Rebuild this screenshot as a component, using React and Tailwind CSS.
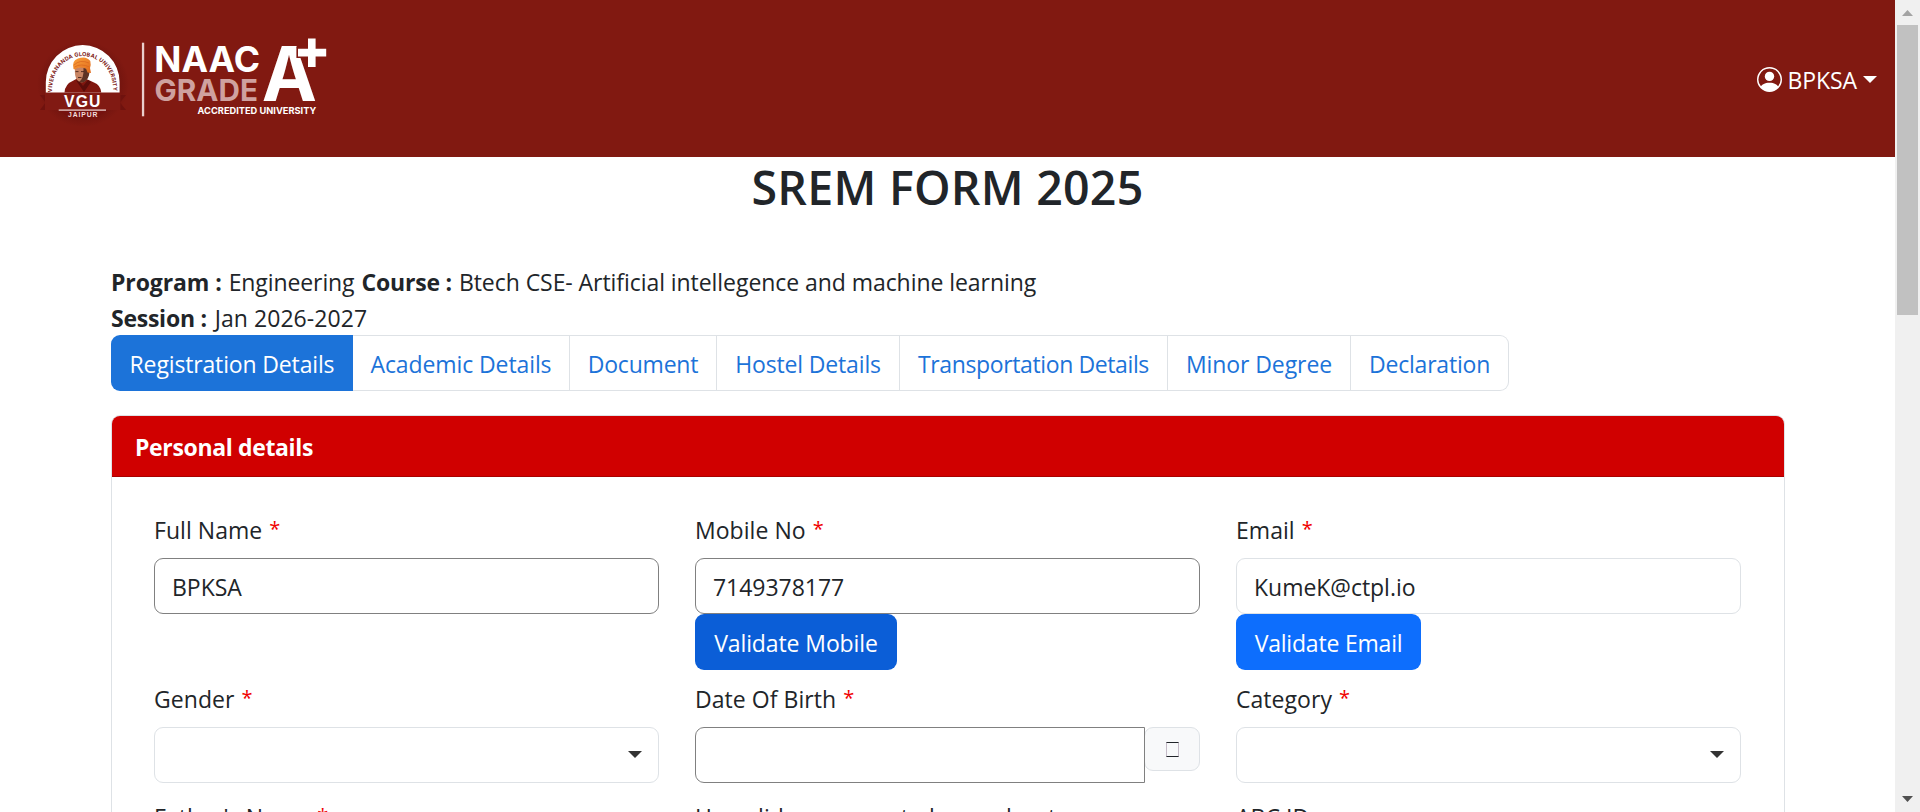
import { BsPersonCircle } from "react-icons/bs";

const tabs = [
  { label: "Registration Details", width: "w-[242px]", track: "tracking-[-0.15px]" },
  { label: "Academic Details", width: "w-[217px]", track: "tracking-[-0.1px]" },
  { label: "Document", width: "w-[147px]", track: "tracking-[-0.2px]" },
  { label: "Hostel Details", width: "w-[183px]", track: "tracking-[-0.15px]" },
  { label: "Transportation Details", width: "w-[268px]", track: "tracking-[-0.38px]" },
  { label: "Minor Degree", width: "w-[183px]", track: "tracking-[-0.08px]" },
  { label: "Declaration", width: "w-[158px]", track: "tracking-[-0.2px]" },
];

function Logo() {
  return (
    <svg className="block h-[157px] w-[360px]" viewBox="0 0 360 157" fontFamily="Inter, sans-serif" fontWeight="700">
      <defs>
        <path id="crest-arc" d="M52.2 92 Q51.6 88 53.4 80.5 A29.8 29.8 0 0 1 112 80.5 Q113.8 88 113 95" />
        <radialGradient id="crest-shadow">
          <stop offset="0.55" stopColor="#5c0d0b" stopOpacity="0.75" />
          <stop offset="1" stopColor="#5c0d0b" stopOpacity="0" />
        </radialGradient>
        <linearGradient id="turban" x1="0" y1="0" x2="1" y2="1">
          <stop offset="0" stopColor="#fba33c" />
          <stop offset="1" stopColor="#e0681a" />
        </linearGradient>
      </defs>
      <ellipse cx="83" cy="84" rx="46" ry="43" fill="url(#crest-shadow)" />
      <path d="M40 95 L52 95 L52 110 L40 110 L45.5 102.5Z M126 95 L113 95 L113 110 L126 110 L120 102.5Z" fill="#6f120e" />
      <path d="M58 110 H108 Q98 118 83 118 Q68 118 58 110Z" fill="#76120f" />
      <path d="M45.8 93 V82 A36.9 36.9 0 0 1 119.6 82 V93Z" fill="#fff" />
      <text fontSize="5.5" letterSpacing="0.15" fill="#7d1814">
        <textPath href="#crest-arc">VIVEKANANDA GLOBAL UNIVERSITY</textPath>
      </text>
      <path d="M64.5 92.5 Q65 84 73.5 80.5 L78 78 L87.5 79.5 L94 82.5 Q100.5 85 101.3 92.5Z" fill="#80170f" />
      <path d="M77 78 L83 86 L88 80 L91 82 L84 92 L76.5 81Z" fill="#5a0d0a" />
      <path d="M75 68 Q74.3 76 77 80 Q80.5 84 84.5 81.5 Q88.5 79 89.5 70 L86 66Z" fill="#c98563" />
      <path d="M83.5 68 L89.5 69 Q90 76 86.5 80 Q83 84 79 81.8 Q84 79 83.5 68Z" fill="#5e3324" />
      <path d="M75.5 71.6 H78.5 M81 71.6 H84 M78 77.5 H81.5" stroke="#4a251c" strokeWidth="0.9" />
      <path d="M73.5 69 Q71.3 61 78 58.6 Q86 55.5 90.3 61 Q91.2 65 90 68 L91 73 L87.5 72.5 L86 68.5 Q79 66 74.8 69.5Z" fill="url(#turban)" />
      <path d="M74 65 Q80 59 89 63 M74.5 67 Q81 63 89.5 67" stroke="#d9661c" strokeWidth="0.7" fill="none" />
      <path d="M45 92.6 H120.4 V110 H45Z" fill="#811a13" />
      <text x="64" y="107.4" fontFamily="Liberation Sans, sans-serif" fontSize="15.8" textLength="36.5" fill="#fff">VGU</text>
      <rect x="58.7" y="109.5" width="47.3" height="1.2" fill="#f3dfdd" />
      <text x="68" y="116.7" fontFamily="Liberation Sans, sans-serif" fontSize="6.8" textLength="29.5" fill="#f3dfdd">JAIPUR</text>
      <rect x="141.9" y="42.7" width="2.3" height="73.6" fill="#eacfcd" />
      <text x="154.3" y="72.2" fontSize="35.2" textLength="105.7" lengthAdjust="spacingAndGlyphs" fill="#fff">NAAC</text>
      <text x="154.6" y="101.3" fontSize="29.6" textLength="103.4" lengthAdjust="spacingAndGlyphs" fill="#cfa19f">GRADE</text>
      <text x="261.7" y="101.2" fontSize="76" fontWeight="700" textLength="55.2" lengthAdjust="spacingAndGlyphs" fill="#fff">A</text>
      <path d="M308 38.4 H315.6 V48.7 H326.2 V56.5 H315.6 V67 H308 V56.5 H298 V48.7 H308Z" fill="#fff" stroke="#811911" strokeWidth="3.2" paintOrder="stroke" />
      <text x="197.6" y="114.2" fontSize="9.2" textLength="118.6" lengthAdjust="spacingAndGlyphs" fill="#fff">ACCREDITED UNIVERSITY</text>
    </svg>
  );
}

function Header() {
  return (
    <header className="flex h-[157px] shrink-0 items-start justify-between bg-[#811911] pr-[18px]">
      <Logo />
      <div className="mt-[62px] flex h-[36px] items-center text-white">
        <BsPersonCircle className="mt-[-1px] size-[25px]" />
        <span className="ml-1.5 tracking-[-0.1px]">BPKSA</span>
        <svg className="ml-[6px] mt-[-2px] h-[7px] w-[14px]" viewBox="0 0 14 7">
          <path d="M0 0H14L7 7Z" fill="currentColor" />
        </svg>
      </div>
    </header>
  );
}

function Field({ label, required, children }) {
  return (
    <div className="flex w-[505px] flex-col items-start">
      <div className="mb-3 h-[35px] whitespace-nowrap pt-px tracking-[0.05px]">
        {label}
        {required && <span className="relative top-[-3px] ml-[7px] text-[20px] text-[#f00000]">*</span>}
      </div>
      {children}
    </div>
  );
}

function TextBox({ value, light }) {
  return (
    <div
      className={
        "flex h-14 w-full items-center rounded-[9px] border bg-white px-[17px] pt-[2px] tracking-[-0.03px] " +
        (light ? "border-[#dee2e6]" : "border-[#808080]")
      }
    >
      {value}
    </div>
  );
}

function SelectBox() {
  return (
    <div className="flex h-14 w-full items-center justify-end rounded-[9px] border border-[#dee2e6] bg-white pr-4">
      <svg className="mt-[-2px] h-[7px] w-[14px]" viewBox="0 0 14 7">
        <path d="M0 0H14L7 7Z" fill="#333" />
      </svg>
    </div>
  );
}

function Scrollbar() {
  return (
    <div className="flex h-full w-[25px] flex-col items-center justify-between bg-[#f0f0f0] pt-[10px] pb-[10px]">
      <div className="flex flex-col items-center">
        <svg className="h-[6px] w-[11px]" viewBox="0 0 11 6">
          <path d="M0 6H11L5.5 0Z" fill="#a3a3a3" />
        </svg>
        <div className="mt-[9px] h-[290px] w-[21px] bg-[#c1c1c1]" />
      </div>
      <svg className="h-[6px] w-[11px]" viewBox="0 0 11 6">
        <path d="M0 0H11L5.5 6Z" fill="#505050" />
      </svg>
    </div>
  );
}

export default function App() {
  return (
    <div className="flex h-[812px] w-[1920px] overflow-hidden bg-white font-['Open_Sans',sans-serif] text-[23px] leading-9 text-[#212529]">
      <div className="flex h-full min-w-0 flex-1 flex-col overflow-hidden">
        <Header />
        <h1 className="h-[111px] shrink-0 pt-px text-center text-[46.5px] font-semibold leading-[58px] tracking-[0.25px]">
          SREM FORM 2025
        </h1>
        <main className="ml-[111px] w-[1674px] shrink-0">
          <div className="flex h-[67px] flex-col whitespace-nowrap">
            <div className="-mt-[4px] h-9 flex-none">
              <b className="tracking-[-0.1px]">Program :</b>
              <span className="ml-[7px] tracking-[-0.1px]">Engineering</span>
              <b className="ml-[7px] tracking-[-0.2px]">Course :</b>
              <span className="ml-[7px] tracking-[-0.06px]">Btech CSE- Artificial intellegence and machine learning</span>
            </div>
            <div className="h-9 flex-none">
              <b className="tracking-[-0.25px]">Session :</b>
              <span className="ml-[8px] tracking-[0.05px]">Jan 2026-2027</span>
            </div>
          </div>
          <nav className="flex h-14">
            {tabs.map((tab, i) => (
              <div
                key={tab.label}
                className={
                  "flex h-14 items-center justify-center whitespace-nowrap pt-px " +
                  tab.width +
                  " " +
                  tab.track +
                  (i === 0
                    ? " rounded-l-[9px] bg-[#1c73d9] text-white"
                    : " border-y border-r border-[#dee2e6] text-[#1c73d9]") +
                  (i === tabs.length - 1 ? " rounded-r-[9px]" : "")
                }
              >
                {tab.label}
              </div>
            ))}
          </nav>
          <section className="mt-6 h-[500px] overflow-hidden rounded-[9px] border border-[#dee2e6]">
            <div className="flex h-[61px] items-center border-b border-[#a80000] bg-[#d00000] pl-[23px] pt-[2px] font-bold tracking-[-0.35px] text-white">
              Personal details
            </div>
            <div className="grid grid-cols-[505px_505px_505px] gap-x-9 px-[42px] pt-[34px]">
              <div className="h-[169px]">
                <Field label="Full Name" required>
                  <TextBox value="BPKSA" />
                </Field>
              </div>
              <div className="h-[169px]">
                <Field label="Mobile No" required>
                  <TextBox value="7149378177" />
                  <button className="h-14 w-[202px] rounded-[9px] bg-[#0b5ed7] pt-px tracking-[-0.1px] text-white">
                    Validate Mobile
                  </button>
                </Field>
              </div>
              <div className="h-[169px]">
                <Field label="Email" required>
                  <TextBox value="KumeK@ctpl.io" light />
                  <button className="h-14 w-[185px] rounded-[9px] bg-[#0d6efd] pt-px tracking-[-0.2px] text-white">
                    Validate Email
                  </button>
                </Field>
              </div>
              <div className="h-[118px]">
                <Field label="Gender" required>
                  <SelectBox />
                </Field>
              </div>
              <div className="h-[118px]">
                <Field label="Date Of Birth" required>
                  <div className="flex w-full items-start">
                    <div className="z-10 h-14 w-[450px] rounded-l-[9px] border border-[#808080] bg-white" />
                    <div className="-ml-px flex h-[44px] flex-1 items-center justify-center rounded-[9px] border border-[#dee2e6] bg-[#f8f9fa]">
                      <div className="h-[15px] w-[13px] border-x border-y border-x-[#c5bcc8] border-y-[#212529]" />
                    </div>
                  </div>
                </Field>
              </div>
              <div className="h-[118px]">
                <Field label="Category" required>
                  <SelectBox />
                </Field>
              </div>
              <Field label="Father's Name" required />
              <Field label="How did you come to know about us" />
              <Field label="ABC ID" />
            </div>
          </section>
        </main>
      </div>
      <Scrollbar />
    </div>
  );
}
